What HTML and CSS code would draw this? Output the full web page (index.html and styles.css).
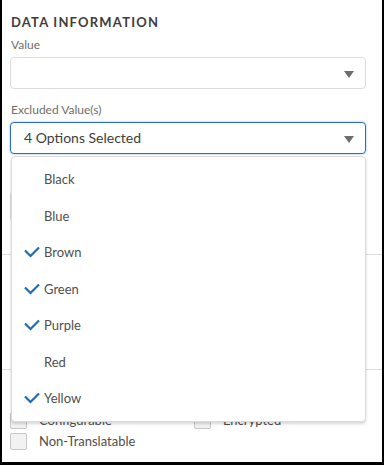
FILE: index.html
```html
<!DOCTYPE html>
<html lang="en">
<head>
    <meta charset="UTF-8">
    <title>Data Information</title>
    <link rel="stylesheet" href="styles.css">
</head>
<body>
    <div class="frame">
        <section class="section first">
            <h2 class="heading">Data Information</h2>
            <div class="field">
                <label class="label">Value</label>
                <div class="combo">
                    <div class="input"><span class="arrow"></span></div>
                </div>
            </div>
            <div class="field">
                <label class="label">Excluded Value(s)</label>
                <div class="combo">
                    <div class="input focus">4 Options Selected<span class="arrow"></span></div>
                    <!-- open listbox -->
                    <ul class="listbox">
                        <li class="option"><span class="check"></span>Black</li>
                        <li class="option"><span class="check"></span>Blue</li>
                        <li class="option selected"><span class="check"><svg viewBox="0 0 16 12" width="16" height="12"><polyline points="1,4.5 6.5,10 15,1.5"/></svg></span>Brown</li>
                        <li class="option selected"><span class="check"><svg viewBox="0 0 16 12" width="16" height="12"><polyline points="1,4.5 6.5,10 15,1.5"/></svg></span>Green</li>
                        <li class="option selected"><span class="check"><svg viewBox="0 0 16 12" width="16" height="12"><polyline points="1,4.5 6.5,10 15,1.5"/></svg></span>Purple</li>
                        <li class="option"><span class="check"></span>Red</li>
                        <li class="option selected"><span class="check"><svg viewBox="0 0 16 12" width="16" height="12"><polyline points="1,4.5 6.5,10 15,1.5"/></svg></span>Yellow</li>
                    </ul>
                </div>
            </div>
            <!-- field hidden under the open listbox -->
            <div class="field hidden-field">
                <div class="label-space"></div>
                <div class="input"></div>
            </div>
        </section>
        <section class="section middle"></section>
        <section class="section options">
            <div class="checks">
                <label class="cb"><span class="box"></span>Configurable</label>
                <label class="cb"><span class="box"></span>Encrypted</label>
                <label class="cb"><span class="box"></span>Non-Translatable</label>
            </div>
        </section>
    </div>
</body>
</html>
```

FILE: styles.css
```css
body {
    margin: 0;
    font-family: Lato, "Open Sans", Arial, sans-serif;
    background: #fff;
}
.frame {
    width: 384px;
    height: 465px;
    box-sizing: border-box;
    border-left: 2px solid #000;
    border-right: 2px solid #000;
    border-bottom: 3px solid #000;
    overflow: hidden;
}
.section {
    padding: 0 16px 0 8px;
    border-bottom: 1px solid #dddbda;
}
.first {
    padding-top: 13px;
    padding-bottom: 32px;
}
.middle {
    height: 114px;
}
.options {
    border-bottom: none;
    padding-top: 42px;
}
.heading {
    margin: 0 0 5px 1px;
    font-size: 13px;
    line-height: 18px;
    font-weight: 700;
    letter-spacing: 1.2px;
    text-transform: uppercase;
    color: #3e3e3c;
}
.field {
    margin-top: 12px;
}
.first .field:first-of-type {
    margin-top: 0;
}
.label {
    display: block;
    margin: 0 0 3px 1px;
    font-size: 12px;
    line-height: 18px;
    color: #706e6b;
}
.label-space {
    height: 21px;
}
.combo {
    position: relative;
}
.input {
    position: relative;
    height: 32px;
    box-sizing: border-box;
    border: 1px solid #dddbda;
    border-radius: 4px;
    padding: 0 12px 0 13px;
    font-size: 14px;
    line-height: 30px;
    color: #3e3e3c;
}
.input.focus {
    border-color: #2a6fbf;
    box-shadow: 0 0 2px #6fa3dc;
}
.arrow {
    position: absolute;
    right: 11px;
    top: 13px;
    width: 0;
    height: 0;
    border-left: 5.5px solid transparent;
    border-right: 5.5px solid transparent;
    border-top: 7px solid #706e6b;
}
.hidden-field {
    margin-top: 15px;
}
.listbox {
    position: absolute;
    top: calc(100% + 2px);
    left: 1px;
    right: 0;
    z-index: 2;
    margin: 0;
    padding: 4px 0;
    list-style: none;
    background: #fff;
    border: 1px solid #dddbda;
    border-radius: 4px;
    box-shadow: 0 2px 3px rgba(0, 0, 0, 0.16);
}
.option {
    display: flex;
    align-items: center;
    height: 36.5px;
    padding-left: 12px;
    font-size: 13px;
    color: #514f4d;
}
.check {
    width: 20px;
    display: flex;
    align-items: center;
}
.check svg {
    fill: none;
    stroke: #1f6cb6;
    stroke-width: 2.2;
}
.checks {
    display: grid;
    grid-template-columns: 184px 1fr;
    row-gap: 5px;
}
.cb {
    display: flex;
    align-items: center;
    gap: 12px;
    height: 16px;
    font-size: 13px;
    color: #514f4d;
}
.box {
    width: 15px;
    height: 15px;
    border: 1px solid #c9c7c5;
    border-radius: 2px;
    background: #f3f2f2;
}
```
